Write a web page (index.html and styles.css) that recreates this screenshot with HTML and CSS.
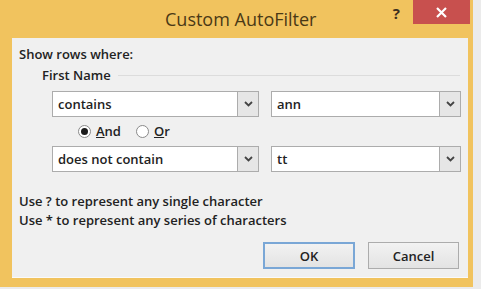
FILE: index.html
```html
<!DOCTYPE html>
<html lang="en">
<head>
    <meta charset="UTF-8">
    <meta name="viewport" content="width=device-width, initial-scale=1.0">
    <title>Custom AutoFilter</title>
    <link rel="stylesheet" href="styles.css">
</head>
<body>

<div class="dialog">
    <div class="titlebar">
        <span class="title">Custom AutoFilter</span>
        <span class="help">?</span>
        <span class="close">
            <svg width="11" height="11" viewBox="0 0 11 11">
                <path d="M1 1 L10 10 M10 1 L1 10" stroke="#ffffff" stroke-width="2.2" fill="none"/>
            </svg>
        </span>
    </div>

    <div class="content">
        <div class="label">Show rows where:</div>

        <div class="groupHead">
            <span>First Name</span>
            <span class="rule"></span>
        </div>

        <div class="row">
            <div class="combo opCombo">
                <span class="comboText">contains</span>
                <span class="arrow"><svg width="9" height="6" viewBox="0 0 9 6"><path d="M1 1 L4.5 4.5 L8 1" stroke="#444" stroke-width="1.8" fill="none"/></svg></span>
            </div>
            <div class="combo valCombo">
                <span class="comboText">ann</span>
                <span class="arrow"><svg width="9" height="6" viewBox="0 0 9 6"><path d="M1 1 L4.5 4.5 L8 1" stroke="#444" stroke-width="1.8" fill="none"/></svg></span>
            </div>
        </div>

        <div class="radios">
            <span class="radio checked"></span>
            <span class="radioLabel"><u>A</u>nd</span>
            <span class="radio"></span>
            <span class="radioLabel"><u>O</u>r</span>
        </div>

        <div class="row">
            <div class="combo opCombo">
                <span class="comboText">does not contain</span>
                <span class="arrow"><svg width="9" height="6" viewBox="0 0 9 6"><path d="M1 1 L4.5 4.5 L8 1" stroke="#444" stroke-width="1.8" fill="none"/></svg></span>
            </div>
            <div class="combo valCombo">
                <span class="comboText">tt</span>
                <span class="arrow"><svg width="9" height="6" viewBox="0 0 9 6"><path d="M1 1 L4.5 4.5 L8 1" stroke="#444" stroke-width="1.8" fill="none"/></svg></span>
            </div>
        </div>

        <div class="hints">
            <div>Use ? to represent any single character</div>
            <div>Use * to represent any series of characters</div>
        </div>

        <div class="buttons">
            <button class="btn btnDefault">OK</button>
            <button class="btn">Cancel</button>
        </div>
    </div>
</div>

</body>
</html>
```

FILE: styles.css
```css
body {
    margin: 0;
    padding: 0;
    background: #ebebeb;
    font-family: "Open Sans", "Noto Sans", sans-serif;
    font-size: 13px;
    font-weight: 600;
    color: #222222;
}

.dialog {
    width: 473px;
    height: 287px;
    background: #f1c35e;
    display: flex;
    flex-direction: column;
}

.titlebar {
    height: 38px;
    display: flex;
    align-items: flex-start;
    flex-shrink: 0;
}

.title {
    margin-left: 165px;
    margin-top: 7px;
    font-size: 18px;
    font-weight: normal;
    line-height: 24px;
    color: #4a3916;
}

.help {
    margin-left: auto;
    margin-top: 3px;
    font-size: 15px;
    font-weight: bold;
    line-height: 20px;
    color: #3d3020;
}

.close {
    width: 57px;
    height: 24px;
    margin-left: 13px;
    margin-right: 3px;
    background: #c8504e;
    display: flex;
    justify-content: center;
    align-items: center;
}

.content {
    flex: 1;
    margin: 0 5px 9px 12px;
    padding: 8px 7px 0 7px;
    background: #f0f0f0;
    border-bottom: 1px solid #fafafa;
}

.label {
    line-height: 16px;
}

.groupHead {
    display: flex;
    align-items: center;
    margin-top: 5px;
    padding-left: 23px;
    line-height: 16px;
}

.rule {
    flex: 1;
    height: 1px;
    background: #dcdcdc;
    margin-left: 7px;
    margin-right: 1px;
}

.row {
    display: flex;
    gap: 12px;
    margin-top: 8px;
    margin-left: 33px;
}

.row + .radios {
    margin-top: 6px;
}

.radios + .row {
    margin-top: 7px;
}

.combo {
    height: 26px;
    box-sizing: border-box;
    border: 1px solid #acacac;
    background: #ffffff;
    display: flex;
    align-items: stretch;
}

.opCombo {
    width: 207px;
}

.valCombo {
    width: 190px;
}

.comboText {
    flex: 1;
    padding-left: 5px;
    line-height: 24px;
}

.arrow {
    width: 20px;
    background: #e6e6e6;
    border-left: 1px solid #acacac;
    display: flex;
    justify-content: center;
    align-items: center;
}

.radios {
    display: flex;
    align-items: center;
    height: 16px;
    padding-left: 59px;
}

.radio {
    width: 11px;
    height: 11px;
    border-radius: 50%;
    border: 1px solid #8a8a8a;
    background: #ffffff;
    display: flex;
    justify-content: center;
    align-items: center;
}

.radio.checked::after {
    content: "";
    width: 7px;
    height: 7px;
    border-radius: 50%;
    background: #1a1a1a;
}

.radioLabel {
    margin-left: 5px;
    margin-right: 15px;
}

.hints {
    margin-top: 20px;
    line-height: 19px;
}

.buttons {
    display: flex;
    justify-content: flex-end;
    gap: 13px;
    margin-top: 12px;
    margin-right: 2px;
}

.btn {
    height: 27px;
    width: 91px;
    font-family: inherit;
    font-size: 13px;
    font-weight: 600;
    color: #222222;
    background: linear-gradient(to bottom, #f2f2f2, #e3e3e3);
    border: 1px solid #acacac;
    padding: 0;
}

.btnDefault {
    width: 92px;
    border: 2px solid #7aa7d6;
}
```
